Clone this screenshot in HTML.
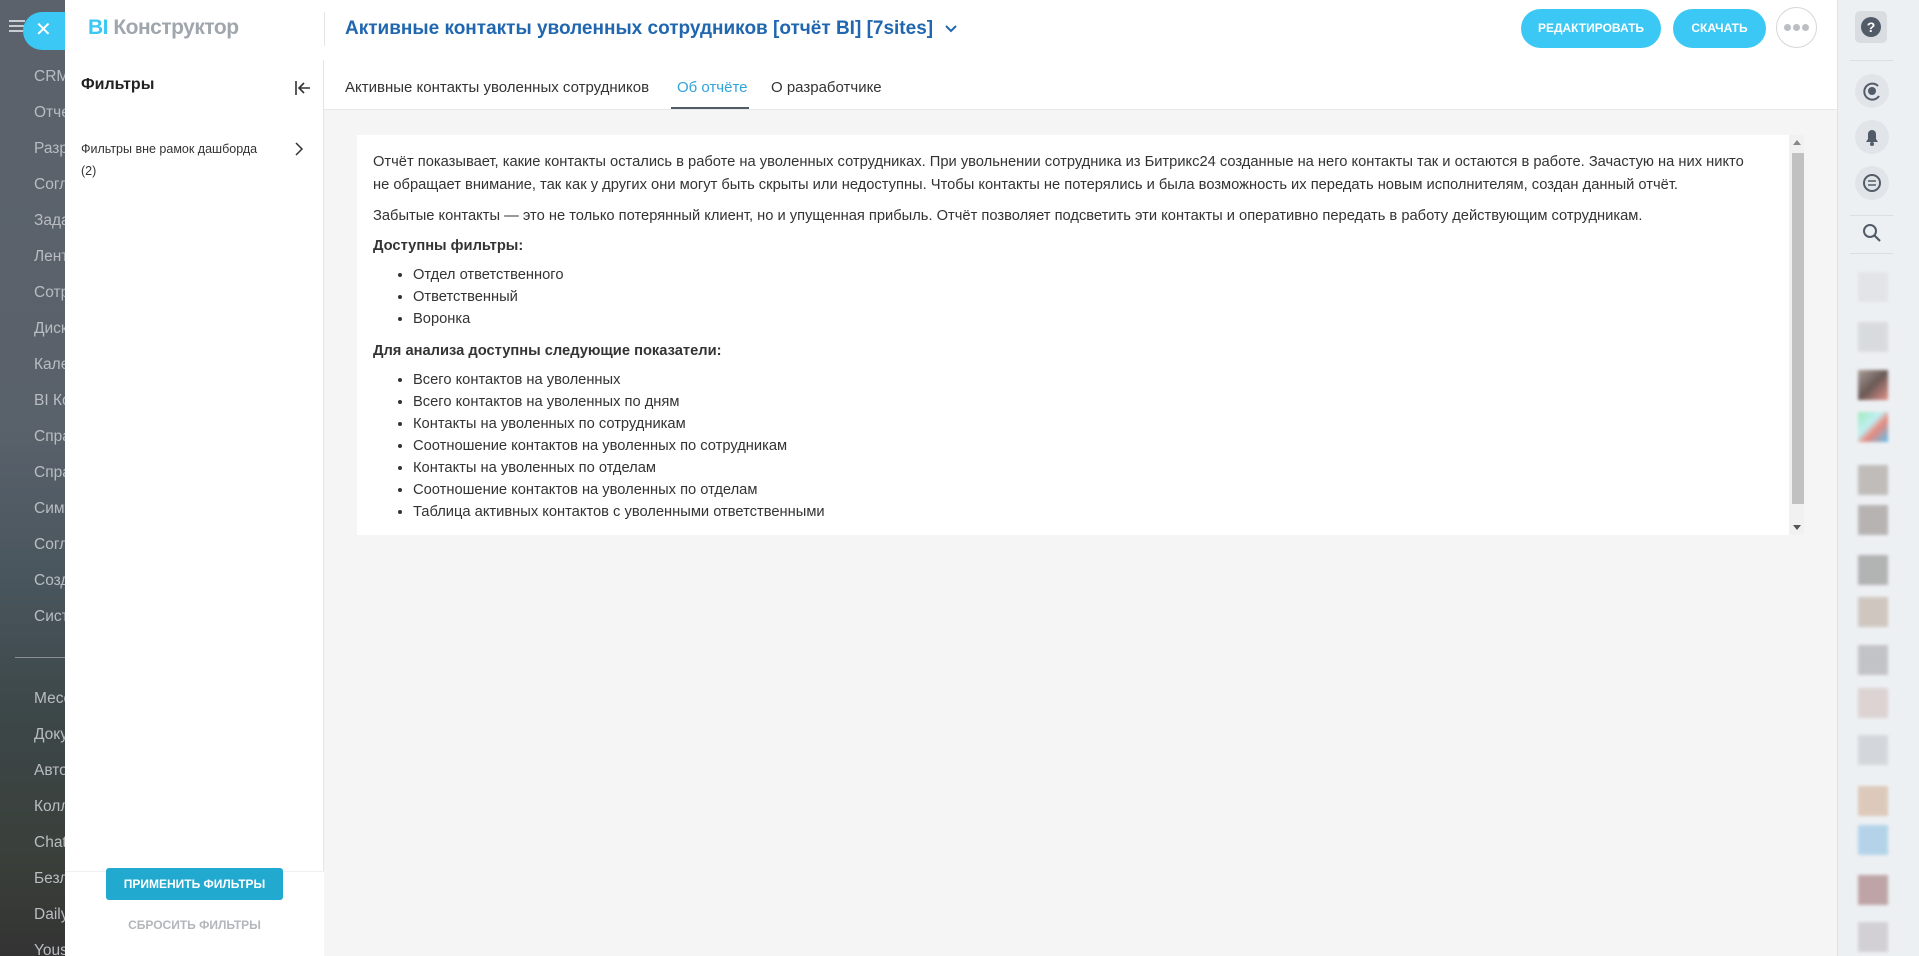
<!DOCTYPE html>
<html><head><meta charset="utf-8">
<style>
*{box-sizing:border-box;margin:0;padding:0}
body{width:1919px;height:956px;overflow:hidden;position:relative;font-family:"Liberation Sans","Noto Sans CJK SC",sans-serif;background:#f5f5f5}
.left{position:absolute;left:0;top:0;width:66px;height:956px;background:linear-gradient(#5c626c 0%,#59616b 45%,#4a565e 60%,#3c4748 75%,#3a3f3a 90%,#333 100%);overflow:hidden}
.left .it{position:absolute;left:34px;color:#b9bdc2;font-size:15.5px;white-space:nowrap}
.left .sep{position:absolute;left:15px;top:657px;width:60px;height:1px;background:#8a9096}
.ham{position:absolute;left:9px;top:20px;width:16px;height:2px;background:#c9ccd0;box-shadow:0 5px 0 #c9ccd0,0 10px 0 #c9ccd0}
.close{position:absolute;left:23px;top:12px;width:60px;height:38px;border-radius:19px;background:#3bc8f5;color:#fff;font-size:20px;line-height:36px;padding-left:12px}
.panel{position:absolute;left:65px;top:0;width:1772px;height:956px;background:#f5f5f5}
.top{position:absolute;left:0;top:0;width:1772px;height:110px;background:#fff;border-bottom:1px solid #e8e8e8}
.logo{position:absolute;left:23px;top:16px;font-size:21px;font-weight:bold;color:#a0a6ad;letter-spacing:-0.5px}
.logo b{color:#3bc8f5}
.vd{position:absolute;left:259px;top:12px;width:1px;height:34px;background:#e3e5e8}
.title{position:absolute;left:280px;top:18px;font-size:19px;font-weight:bold;color:#2067b0;white-space:nowrap}
.btn{position:absolute;top:9px;height:39px;border-radius:20px;background:#3bc8f5;color:#fff;font-weight:bold;font-size:12px;text-align:center;line-height:39px}
.dots{position:absolute;left:1711px;top:7px;width:41px;height:41px;border-radius:50%;border:1px solid #d5d7da;background:#fff;text-align:center}
.dots i{display:inline-block;width:7px;height:7px;border-radius:50%;background:#bbbfc4;margin:16px 1px 0}
.fp{position:absolute;left:0;top:60px;width:259px;height:896px;background:#fff;border-right:1px solid #e3e5e8}
.fh{position:absolute;left:16px;top:16px;font-size:16px;font-weight:bold;color:#222}
.fi{position:absolute;left:16px;top:78px;font-size:12.5px;color:#333;line-height:22px}
.foot{position:absolute;left:0;top:811px;width:259px;height:85px;border-top:1px solid #eef0f2;background:#fff}
.apply{position:absolute;left:41px;top:-4px;width:177px;height:32px;border-radius:3px;background:#22a9cf;color:#fff;font-weight:bold;font-size:12px;text-align:center;line-height:32px}
.reset{position:absolute;left:0;width:259px;top:46px;text-align:center;color:#b3b6ba;font-weight:bold;font-size:12px}
.tab{position:absolute;top:79px;font-size:15px;color:#333;white-space:nowrap}
.card{position:absolute;left:292px;top:135px;width:1447px;height:400px;background:#fff;font-size:14.7px;color:#333;padding:16px 16px}
.card p{line-height:23.3px;margin-bottom:7px;width:1400px}
.card h4{font-size:14.7px;line-height:23px;margin:0 0 6px}
.card ul{margin-left:40px;margin-bottom:10px}
.card li{line-height:22px}
.sb{position:absolute;right:0;top:0;width:15px;height:400px;background:#f1f1f1}
.sb .th{position:absolute;left:3px;top:18px;width:12px;height:351px;background:#c1c1c1}
.right{position:absolute;left:1837px;top:0;width:82px;height:956px;background:#edf0f3;border-left:1px solid #dfe3e7}
.rs{position:absolute;left:12px;width:43px;height:1px;background:#dbdfe3}
.circ{position:absolute;left:17px;width:34px;height:34px;border-radius:50%;background:#e1e4e8}
.av{position:absolute;left:20px;width:30px;height:30px;filter:blur(1.5px);opacity:.8}
</style></head><body>
<div class="left">
<div class="ham"></div>
<div class="it" style="top:68px">CRM</div><div class="it" style="top:104px">Отчеты</div><div class="it" style="top:140px">Разработка</div><div class="it" style="top:176px">Согласование</div><div class="it" style="top:212px">Задачи</div><div class="it" style="top:248px">Лента</div><div class="it" style="top:284px">Сотрудники</div><div class="it" style="top:320px">Диск</div><div class="it" style="top:356px">Календарь</div><div class="it" style="top:392px">BI Конструктор</div><div class="it" style="top:428px">Справочник</div><div class="it" style="top:464px">Справка</div><div class="it" style="top:500px">Симулятор</div><div class="it" style="top:536px">Согласие</div><div class="it" style="top:572px">Создать</div><div class="it" style="top:608px">Система</div>
<div class="sep"></div>
<div class="it" style="top:690px">Мессенджер</div><div class="it" style="top:726px">Документы</div><div class="it" style="top:762px">Автоматизация</div><div class="it" style="top:798px">Коллеги</div><div class="it" style="top:834px">Chat</div><div class="it" style="top:870px">Безлимит</div><div class="it" style="top:906px">Daily</div><div class="it" style="top:942px">Youscan</div>
</div>
<div class="close">✕</div>
<div class="panel">
<div class="top">
<div class="logo"><b>BI</b> Конструктор</div>
<div class="vd"></div>
<div class="title">Активные контакты уволенных сотрудников [отчёт BI] [7sites] <svg width="14" height="10" viewBox="0 0 14 10" style="margin-left:6px"><path d="M2 2l5 5 5-5" stroke="#2067b0" stroke-width="2" fill="none"/></svg></div>
<div class="btn" style="left:1456px;width:140px">РЕДАКТИРОВАТЬ</div>
<div class="btn" style="left:1608px;width:93px">СКАЧАТЬ</div>
<div class="dots"><i></i><i></i><i></i></div>
<div class="tab" style="left:280px">Активные контакты уволенных сотрудников</div>
<div class="tab" style="left:612px;color:#2fa4d7">Об отчёте</div>
<div style="position:absolute;left:606px;top:107px;width:78px;height:2px;background:#535c69"></div>
<div class="tab" style="left:706px">О разработчике</div>
</div>
<div class="fp">
<div class="fh">Фильтры</div>
<svg style="position:absolute;left:229px;top:20px" width="18" height="16" viewBox="0 0 18 16"><path d="M2 1v14M16 8H6M10 3L5 8l5 5" stroke="#333" stroke-width="1.6" fill="none"/></svg>
<div class="fi">Фильтры вне рамок дашборда<br>(2)</div>
<svg style="position:absolute;left:229px;top:82px" width="10" height="14" viewBox="0 0 10 14"><path d="M2 1l6 6-6 6" stroke="#333" stroke-width="1.5" fill="none"/></svg>
<div class="foot"><div class="apply">ПРИМЕНИТЬ ФИЛЬТРЫ</div><div class="reset">СБРОСИТЬ ФИЛЬТРЫ</div></div>
</div>
<div class="card">
<p>Отчёт показывает, какие контакты остались в работе на уволенных сотрудниках. При увольнении сотрудника из Битрикс24 созданные на него контакты так и остаются в работе. Зачастую на них никто<br>не обращает внимание, так как у других они могут быть скрыты или недоступны. Чтобы контакты не потерялись и была возможность их передать новым исполнителям, создан данный отчёт.</p>
<p>Забытые контакты — это не только потерянный клиент, но и упущенная прибыль. Отчёт позволяет подсветить эти контакты и оперативно передать в работу действующим сотрудникам.</p>
<h4>Доступны фильтры:</h4>
<ul><li>Отдел ответственного</li><li>Ответственный</li><li>Воронка</li></ul>
<h4>Для анализа доступны следующие показатели:</h4>
<ul><li>Всего контактов на уволенных</li><li>Всего контактов на уволенных по дням</li><li>Контакты на уволенных по сотрудникам</li><li>Соотношение контактов на уволенных по сотрудникам</li><li>Контакты на уволенных по отделам</li><li>Соотношение контактов на уволенных по отделам</li><li>Таблица активных контактов с уволенными ответственными</li></ul>
<div class="sb"><div class="th"></div>
<svg style="position:absolute;left:4px;top:5px" width="8" height="5"><path d="M0 5L4 0 8 5z" fill="#888"/></svg>
<svg style="position:absolute;left:4px;top:390px" width="8" height="5"><path d="M0 0L4 5 8 0z" fill="#555"/></svg></div>
</div>
</div>
<div class="right">
<div style="position:absolute;left:17px;top:11px;width:32px;height:32px;border-radius:5px;background:#d9dde1"><div style="position:absolute;left:6px;top:6px;width:20px;height:20px;border-radius:50%;background:#525c69;color:#fff;font-weight:bold;font-size:14px;text-align:center;line-height:20px">?</div></div>
<div class="rs" style="top:60px"></div>
<div class="circ" style="top:74px"><svg width="34" height="34" viewBox="0 0 34 34"><path d="M23 12a8 8 0 1 0 1 10" stroke="#525c69" stroke-width="2" fill="none"/><circle cx="17" cy="17" r="4" fill="#525c69"/></svg></div>
<div class="circ" style="top:120px"><svg width="34" height="34" viewBox="0 0 34 34"><path d="M11 22h12l-2-3v-5a4 4 0 0 0-8 0v5z" fill="#525c69"/><circle cx="17" cy="24" r="2" fill="#525c69"/></svg></div>
<div class="circ" style="top:166px"><svg width="34" height="34" viewBox="0 0 34 34"><circle cx="17" cy="17" r="8" stroke="#525c69" stroke-width="2" fill="none"/><path d="M13 15h8M13 19h8" stroke="#525c69" stroke-width="1.6"/></svg></div>
<div class="rs" style="top:215px"></div>
<svg style="position:absolute;left:24px;top:222px" width="20" height="22" viewBox="0 0 20 22"><circle cx="8" cy="9" r="6" stroke="#525c69" stroke-width="2" fill="none"/><path d="M12 13l6 6" stroke="#525c69" stroke-width="2.2"/></svg>
<div class="rs" style="top:253px"></div>
<div class="av" style="top:272px;background:#e0e2e5"></div>
<div class="av" style="top:322px;background:#d4d6d8"></div>
<div class="av" style="top:370px;background:linear-gradient(135deg,#9a8a84,#4a3530 50%,#e07a6e)"></div>
<div class="av" style="top:412px;background:linear-gradient(135deg,#8de8b0,#b5f0f3 40%,#e87060 60%,#3ab4f0)"></div>
<div class="av" style="top:465px;background:#b5b0ab"></div>
<div class="av" style="top:505px;background:#aaa5a3"></div>
<div class="av" style="top:555px;background:#a4a4a4"></div>
<div class="av" style="top:597px;background:#c8bdb3"></div>
<div class="av" style="top:645px;background:#b8b9bd"></div>
<div class="av" style="top:688px;background:#d8ccca"></div>
<div class="av" style="top:735px;background:#cdd2d6"></div>
<div class="av" style="top:786px;background:#d8c0ac"></div>
<div class="av" style="top:825px;background:#a6cde6"></div>
<div class="av" style="top:875px;background:#b39295"></div>
<div class="av" style="top:922px;background:#ccc9cc"></div>
</div>
</body></html>
